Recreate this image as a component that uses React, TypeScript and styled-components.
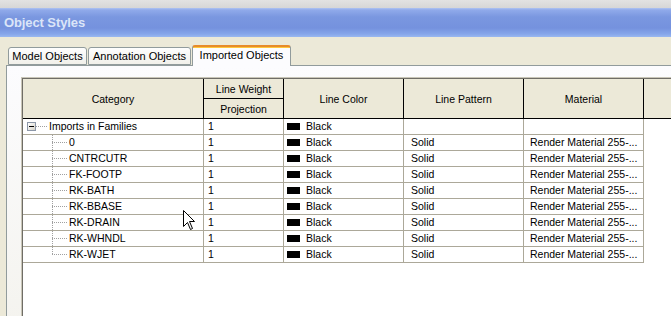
import styled, { createGlobalStyle } from 'styled-components'

const gridCols = '181px 80px 120px 120px 120px'
const lineGrey = '#aca899'
const dotGrey = '#a0a0a0'

const GlobalStyle = createGlobalStyle`
  html, body {
    margin: 0;
    padding: 0;
    overflow: hidden;
    background: #ece9d8;
  }
  * {
    box-sizing: border-box;
  }
`

const Screen = styled.div`
  position: relative;
  width: 671px;
  height: 316px;
  overflow: hidden;
  display: flex;
  flex-direction: column;
  font-family: 'Liberation Sans', Arial, sans-serif;
  background: #ece9d8;
`

const TopStrip = styled.div`
  height: 8px;
  flex: none;
  background: linear-gradient(#e2e2e2, #d6d6d6);
`

const TitleBar = styled.div`
  height: 29px;
  flex: none;
  display: flex;
  align-items: center;
  padding: 0 0 1px 4px;
  background: linear-gradient(
    #aec3f2 0px,
    #90aaea 2px,
    #7a97e0 9px,
    #7592de 20px,
    #86a6ea 26px,
    #9ab8f0 29px
  );
  color: #dbe5f8;
  font-size: 13px;
  font-weight: bold;
  letter-spacing: -0.1px;
`

const Body = styled.div`
  flex: 1;
  display: flex;
  flex-direction: column;
  padding-top: 8px;
`

const TabStrip = styled.div`
  height: 20px;
  flex: none;
  display: flex;
  align-items: flex-end;
  gap: 1px;
  padding-left: 8px;
  position: relative;
  z-index: 1;
`

const Tab = styled.div<{ $active?: boolean; $width: number }>`
  width: ${p => p.$width}px;
  height: ${p => (p.$active ? 21 : 18)}px;
  margin-bottom: ${p => (p.$active ? -1 : 0)}px;
  display: flex;
  align-items: center;
  justify-content: center;
  padding-bottom: ${p => (p.$active ? 3 : 0)}px;
  font-size: 11px;
  color: #000;
  border: 1px solid #919b9c;
  border-bottom: ${p => (p.$active ? 'none' : '1px solid #919b9c')};
  border-top: ${p => (p.$active ? '2px solid #e68b2c' : '1px solid #919b9c')};
  border-radius: 3px 3px 0 0;
  background: ${p =>
    p.$active
      ? 'linear-gradient(#ffc83c 0, #ffc83c 1px, #fcfcfe 1px, #fcfcfe 100%)'
      : 'linear-gradient(#fefefe, #f1f0ea)'};
`

const Panel = styled.div`
  flex: 1;
  margin-left: 6px;
  margin-right: -20px;
  margin-bottom: -20px;
  border: 1px solid #919b9c;
  background: linear-gradient(#fcfcfe, #f4f3ee);
  padding: 12px 0 0 15px;
  display: flex;
`

const Grid = styled.div`
  flex: 1;
  background: #fff;
  border-top: 1px solid #6f6d66;
  border-left: 1px solid #6f6d66;
  box-shadow: -1px -1px 0 #c9c6b8;
`

const Header = styled.div`
  display: grid;
  grid-template-columns: ${gridCols} 1fr;
  grid-template-rows: 20px 20px;
  background: #ece9d8;
  font-size: 10.5px;
`

const HeaderCell = styled.div<{ $tall?: boolean; $edge?: boolean }>`
  grid-row: ${p => (p.$tall ? 'span 2' : 'auto')};
  display: flex;
  align-items: center;
  justify-content: center;
  padding-top: 1px;
  border-right: ${p => (p.$edge ? 'none' : '1px solid #000')};
  border-bottom: 1px solid #000;
`

const Row = styled.div`
  display: grid;
  grid-template-columns: ${gridCols};
  width: fit-content;
  font-size: 10.5px;
`

const Cell = styled.div<{ $pad: number }>`
  height: 16px;
  display: flex;
  align-items: center;
  padding-left: ${p => p.$pad}px;
  line-height: 15px;
  white-space: nowrap;
  overflow: hidden;
  border-right: 1px solid ${lineGrey};
  border-bottom: 1px solid ${lineGrey};
`

const ExpandBox = styled.span`
  width: 9px;
  height: 9px;
  flex: none;
  display: flex;
  align-items: center;
  justify-content: center;
  border: 1px solid #8c97a8;
  background: linear-gradient(135deg, #ffffff, #d6d3c8);

  &::after {
    content: '';
    width: 5px;
    height: 1px;
    background: #000;
  }
`

const Branch = styled.span<{ $width: number; $vertical?: 'full' | 'half' }>`
  width: ${p => p.$width}px;
  height: 15px;
  flex: none;
  margin-right: 1px;
  background-image: repeating-linear-gradient(to right, ${dotGrey} 0 1px, transparent 1px 2px)
    ${p =>
      p.$vertical
        ? `, repeating-linear-gradient(to bottom, ${dotGrey} 0 1px, transparent 1px 2px)`
        : ''};
  background-size: 100% 1px
    ${p => (p.$vertical ? `, 1px ${p.$vertical === 'half' ? '8px' : '100%'}` : '')};
  background-position: 0 7px ${p => (p.$vertical ? ', 0 0' : '')};
  background-repeat: no-repeat;
`

const Swatch = styled.span`
  width: 13px;
  height: 7px;
  flex: none;
  margin-right: 6px;
  background: #000;
`

const Cursor = styled.svg`
  position: absolute;
  left: 183px;
  top: 210px;
`

type Layer = {
  name: string
  parent?: boolean
}

const layers: Layer[] = [
  { name: 'Imports in Families', parent: true },
  { name: '0' },
  { name: 'CNTRCUTR' },
  { name: 'FK-FOOTP' },
  { name: 'RK-BATH' },
  { name: 'RK-BBASE' },
  { name: 'RK-DRAIN' },
  { name: 'RK-WHNDL' },
  { name: 'RK-WJET' },
]

export default function App() {
  return (
    <Screen>
      <GlobalStyle />
      <TopStrip />
      <TitleBar>Object Styles</TitleBar>
      <Body>
        <TabStrip>
          <Tab $width={79}>Model Objects</Tab>
          <Tab $width={103}>Annotation Objects</Tab>
          <Tab $width={99} $active>Imported Objects</Tab>
        </TabStrip>
        <Panel>
          <Grid>
            <Header>
              <HeaderCell $tall>Category</HeaderCell>
              <HeaderCell>Line Weight</HeaderCell>
              <HeaderCell $tall>Line Color</HeaderCell>
              <HeaderCell $tall>Line Pattern</HeaderCell>
              <HeaderCell $tall>Material</HeaderCell>
              <HeaderCell $tall $edge />
              <HeaderCell>Projection</HeaderCell>
            </Header>
            {layers.map((layer, i) => (
              <Row key={layer.name}>
                {layer.parent ? (
                  <Cell $pad={4}>
                    <ExpandBox />
                    <Branch $width={12} />
                    {layer.name}
                  </Cell>
                ) : (
                  <Cell $pad={29}>
                    <Branch $width={16} $vertical={i === layers.length - 1 ? 'half' : 'full'} />
                    {layer.name}
                  </Cell>
                )}
                <Cell $pad={4}>1</Cell>
                <Cell $pad={3}>
                  <Swatch />
                  Black
                </Cell>
                <Cell $pad={7}>{layer.parent ? '' : 'Solid'}</Cell>
                <Cell $pad={6}>{layer.parent ? '' : 'Render Material 255-...'}</Cell>
              </Row>
            ))}
          </Grid>
        </Panel>
      </Body>
      <Cursor width="13" height="21" viewBox="0 0 13 21">
        <path
          d="M0.5 0.5 L0.5 16.5 L4.5 12.5 L7.5 19.5 L9.5 18.5 L6.5 11.5 L11.5 11.5 Z"
          fill="#fff"
          stroke="#000"
          strokeWidth="1"
        />
      </Cursor>
    </Screen>
  )
}
